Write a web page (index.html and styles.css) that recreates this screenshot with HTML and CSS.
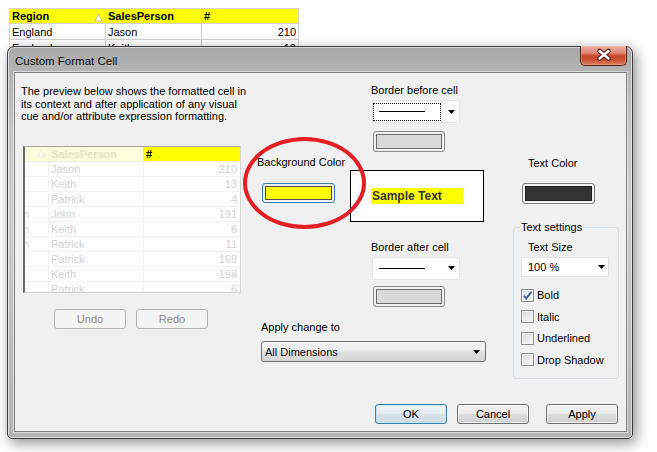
FILE: index.html
```html
<!DOCTYPE html>
<html>
<head>
<meta charset="utf-8">
<title>Custom Format Cell</title>
<link rel="stylesheet" href="styles.css">
</head>
<body>
<div class="desk">
  <table class="sheet">
    <colgroup><col class="w1"><col class="w2"><col class="w3"></colgroup>
    <tr class="hrow">
      <th>Region<svg class="sort" width="9" height="9" viewBox="0 0 9 9"><path d="M4.5 0.8 L8.3 8.2 H0.7 Z" fill="#ffffc8" stroke="#c3c39a" stroke-width="1"/></svg></th>
      <th>SalesPerson</th>
      <th>#</th>
    </tr>
    <tr><td>England</td><td>Jason</td><td class="num">210</td></tr>
    <tr><td>England</td><td>Keith</td><td class="num">13</td></tr>
    <tr><td>England</td><td>Patrick</td><td class="num">4</td></tr>
  </table>

  <div class="win">
    <div class="titlebar">
      <span class="title">Custom Format Cell</span>
      <div class="close">
        <svg width="47" height="20" viewBox="0 0 47 20">
          <path d="M19.5 6 L28.5 13.5 M28.5 6 L19.5 13.5" stroke="#4a1a12" stroke-width="4.6" stroke-linecap="round"/>
          <path d="M19.5 6 L28.5 13.5 M28.5 6 L19.5 13.5" stroke="#ffffff" stroke-width="2.4" stroke-linecap="round"/>
        </svg>
      </div>
    </div>
    <div class="client">
      <div class="main">
        <div class="left">
          <p class="desc">The preview below shows the formatted cell in<br>its context and after application of any visual<br>cue and/or attribute expression formatting.</p>
          <div class="preview">
            <div class="prow phead"><span class="c1"><svg width="9" height="9" viewBox="0 0 9 9"><path d="M4.5 0.8 L8.3 8.2 H0.7 Z" fill="#fffff0" stroke="#ecebd6" stroke-width="1"/></svg></span><span class="c2">SalesPerson</span><span class="c3">#</span></div>
            <div class="prow"><span class="c1"></span><span class="c2">Jason</span><span class="c3">210</span></div>
            <div class="prow"><span class="c1"></span><span class="c2">Keith</span><span class="c3">13</span></div>
            <div class="prow"><span class="c1"></span><span class="c2">Patrick</span><span class="c3">4</span></div>
            <div class="prow"><span class="c1"><span class="tail">n</span></span><span class="c2">John</span><span class="c3">191</span></div>
            <div class="prow"><span class="c1"><span class="tail">n</span></span><span class="c2">Keith</span><span class="c3">6</span></div>
            <div class="prow"><span class="c1"><span class="tail">n</span></span><span class="c2">Patrick</span><span class="c3">11</span></div>
            <div class="prow"><span class="c1"></span><span class="c2">Patrick</span><span class="c3">169</span></div>
            <div class="prow"><span class="c1"></span><span class="c2">Keith</span><span class="c3">198</span></div>
            <div class="prow"><span class="c1"></span><span class="c2">Patrick</span><span class="c3">6</span></div>
          </div>
          <div class="undo-row">
            <button class="btn dis">Undo</button>
            <button class="btn dis">Redo</button>
          </div>
        </div>

        <div class="center">
          <div class="center-top">
            <div class="bgcol">
              <div class="lbl bglbl">Background Color</div>
              <div class="swatch sw-focus sw-bg"><span class="fill fill-yellow"></span></div>
            </div>
            <div class="bordcol">
              <div class="lbl blbl">Border before cell</div>
              <div class="linesel ls-before">
                <span class="lsample focusrect"><span class="ln"></span></span>
                <svg class="arr" width="7" height="4" viewBox="0 0 7 4"><path d="M0 0H7L3.5 4Z" fill="#000"/></svg>
              </div>
              <div class="swatch sw-border sw-b1"><span class="fill fill-gray"></span></div>
              <div class="sample"><span class="sample-text">Sample Text</span></div>
              <div class="lbl blbl albl">Border after cell</div>
              <div class="linesel ls-after">
                <span class="lsample"><span class="ln"></span></span>
                <svg class="arr" width="7" height="4" viewBox="0 0 7 4"><path d="M0 0H7L3.5 4Z" fill="#000"/></svg>
              </div>
              <div class="swatch sw-border sw-b2"><span class="fill fill-gray"></span></div>
            </div>
          </div>
          <div class="apply">
            <div class="lbl">Apply change to</div>
            <div class="combo"><span>All Dimensions</span><svg class="arr" width="7" height="4" viewBox="0 0 7 4"><path d="M0 0H7L3.5 4Z" fill="#000"/></svg></div>
          </div>
        </div>

        <div class="right">
          <div class="lbl tclbl">Text Color</div>
          <div class="swatch sw-border sw-tc"><span class="fill fill-dark"></span></div>
          <fieldset class="group">
            <legend>Text settings</legend>
            <div class="lbl tslbl">Text Size</div>
            <div class="select"><span>100 %</span><svg class="arr" width="7" height="4" viewBox="0 0 7 4"><path d="M0 0H7L3.5 4Z" fill="#000"/></svg></div>
            <div class="checks">
              <label class="chk"><span class="box checked"><svg width="11" height="11" viewBox="0 0 11 11"><path d="M1.8 5.6 L4.3 8.4 L9.4 1.8" fill="none" stroke="#4b5f8c" stroke-width="1.9"/></svg></span>Bold</label>
              <label class="chk"><span class="box"></span>Italic</label>
              <label class="chk"><span class="box"></span>Underlined</label>
              <label class="chk"><span class="box"></span>Drop Shadow</label>
            </div>
          </fieldset>
        </div>
      </div>
      <div class="footer">
        <button class="btn def">OK</button>
        <button class="btn">Cancel</button>
        <button class="btn apply-btn">Apply</button>
      </div>
    </div>
  </div>

  <div class="ellipse"></div>
</div>
</body>
</html>
```

FILE: styles.css
```css
* { box-sizing: border-box; }
html, body { margin: 0; padding: 0; background: #fff; }
body {
  font-family: "Liberation Sans", Arial, sans-serif;
  font-size: 11px;
  color: #000;
  width: 657px;
  height: 452px;
  overflow: hidden;
}
.desk { position: relative; width: 657px; height: 452px; padding: 8px 0 0 9px; }

/* background sheet table */
.sheet { border-collapse: collapse; table-layout: fixed; width: 289px; }
.sheet .w1 { width: 96px; }
.sheet .w2 { width: 96px; }
.sheet .w3 { width: 97px; }
.sheet th, .sheet td {
  border: 1px solid #d2d2d2;
  padding: 0 2px;
  text-align: left;
  white-space: nowrap;
  overflow: hidden;
  font-size: 11px;
}
.sheet th { height: 15px; line-height: 13px; background: #ffff00; font-weight: bold; }
.sheet td { height: 16px; line-height: 14px; background: #fff; }
.sheet td.num { text-align: right; }
.sheet .sort { float: right; margin-top: 3px; margin-right: 0; }

/* dialog window */
.win {
  position: absolute;
  left: 7px;
  top: 46px;
  width: 626px;
  height: 393px;
  border: 1px solid #3c3c3c;
  border-radius: 7px 7px 5px 5px;
  background: linear-gradient(180deg, #a9a9a9 0%, #b3b3b3 6%, #c6c6c6 22%, #cfcfcf 40%, #bdbdbd 75%, #b4b4b4 100%);
  box-shadow: 3px 4px 14px rgba(0, 0, 0, 0.45), inset 0 0 0 1px rgba(255, 255, 255, 0.55);
  display: flex;
  flex-direction: column;
  padding: 0 5px 6px 6px;
}
.titlebar { height: 25px; display: flex; align-items: flex-start; }
.title { padding: 7px 0 0 1px; font-size: 11.5px; line-height: 15px; color: #0c0c0c; }
.close {
  margin-left: auto;
  margin-top: -1px;
  width: 47px;
  height: 20px;
  border: 1px solid #5b1f16;
  border-top: none;
  border-radius: 0 0 5px 5px;
  background: linear-gradient(180deg, #eab0a3 0%, #de8877 35%, #c9472f 52%, #c94d33 70%, #dc7c5d 100%);
  box-shadow: inset 0 0 0 1px rgba(255, 200, 190, 0.35);
}
.close svg { display: block; margin: -1px 0 0 -1px; }

.client {
  flex: 1;
  background: #f0f0f0;
  border: 1px solid #808080;
  box-shadow: 0 0 0 1px rgba(255, 255, 255, 0.5);
  display: flex;
  flex-direction: column;
}
.main { flex: 1; display: flex; }

.lbl { line-height: 13px; white-space: nowrap; }

/* left column */
.left { width: 236px; padding: 12px 0 0 6px; }
.desc { margin: 0; line-height: 12.5px; }
.preview {
  width: 218px;
  height: 147px;
  margin: 23px 0 0 2px;
  background: #fff;
  border-top: 1px solid #a8a8a8;
  border-left: 2px solid #6a6a6a;
  border-right: 1px solid #d6d6d6;
  border-bottom: 1px solid #d0d0d0;
  overflow: hidden;
}
.prow {
  display: grid;
  grid-template-columns: 23px 95px 1fr;
  height: 15px;
  line-height: 14px;
  border-bottom: 1px solid #f3f3f3;
  color: #d2d2d2;
}
.prow .c1 { overflow: hidden; white-space: nowrap; }
.prow .c2 { padding-left: 2px; border-left: 1px solid #f2f2f2; }
.prow .c3 { text-align: right; padding-right: 3px; border-left: 1px solid #f2f2f2; }
.prow .tail { display: inline-block; margin-left: -2px; }
.phead { background: #fdfddc; font-weight: bold; color: #e4e3c6; border-bottom: 1px solid #efefd8; }
.phead .c1 { display: flex; justify-content: flex-end; align-items: center; padding-right: 2px; }
.phead .c1 svg { display: block; }
.phead .c2 { border-left-color: #f4f4dc; }
.phead .c3 { background: #ffff00; color: #000; text-align: left; padding-left: 2px; border-left: 1px solid #e8e8c8; }

.undo-row { display: flex; gap: 10px; margin: 16px 0 0 33px; }

/* buttons */
.btn {
  width: 72px;
  height: 20px;
  padding: 0;
  font-family: inherit;
  font-size: 11px;
  color: #000;
  border: 1px solid #707070;
  border-radius: 3px;
  background: linear-gradient(180deg, #f2f2f2 0%, #ebebeb 48%, #dddddd 52%, #cfcfcf 100%);
  box-shadow: inset 0 0 0 1px rgba(255, 255, 255, 0.7);
}
.btn.dis {
  color: #8a8a8a;
  border-color: #b3b3b3;
  background: #f4f4f4;
  box-shadow: none;
}
.btn.def {
  border-color: #3c7fb1;
  background: linear-gradient(180deg, #eef4f8 0%, #e6edf2 48%, #d8e2e9 52%, #cfdae2 100%);
  box-shadow: inset 0 0 0 1px rgba(180, 230, 250, 0.8);
}

/* center column */
.center { width: 262px; display: flex; flex-direction: column; }
.center-top { display: flex; }
.bgcol { width: 99px; padding-top: 83px; }
.bglbl { padding-left: 6px; }
.bordcol { flex: 1; padding-top: 10.5px; display: flex; flex-direction: column; align-items: flex-start; }
.blbl { margin-left: 21px; }
.albl { margin-top: 18.5px; }

.swatch {
  width: 72px;
  height: 21px;
  border: 1px solid #8a8a8a;
  border-radius: 3px;
  padding: 2px;
  background: #f2f2f2;
}
.swatch .fill { display: block; height: 100%; border: 1px solid #666; }
.sw-focus { border-color: #3d7bb0; width: 73px; height: 20px; }
.sw-bg { margin: 14px 0 0 11px; }
.sw-b1 { margin: 8px 0 0 23px; }
.sw-b2 { margin: 6px 0 0 23px; }
.sw-tc { width: 73px; margin: 13.5px 0 0 9px; border-color: #7c7c7c; }
.fill-yellow { background: #ffff00; border-color: #4d4d4d !important; }
.fill-gray { background: #dadada; border-color: #6b6b6b !important; }
.fill-dark { background: #333333; border-color: #1e1e1e !important; }

.linesel {
  width: 88px;
  height: 23px;
  background: #fff;
  border: 1px solid #e4e4e4;
  display: flex;
  align-items: center;
  margin: 3.5px 0 0 22px;
}
.ls-after { margin-top: 3px; }
.lsample {
  width: 68px;
  height: 18px;
  border: 1px dotted transparent;
  display: flex;
  align-items: center;
  padding-left: 5px;
}
.lsample.focusrect { border-color: #000; }
.ln { display: block; width: 46px; height: 1px; background: #000; }
.arr { display: block; margin-left: auto; margin-right: 4px; }

.sample {
  width: 134px;
  height: 52px;
  margin-top: 18px;
  border: 1px solid #000;
  background: #fff;
  padding: 16.7px 0 0 20px;
}
.sample-text {
  display: block;
  width: 92px;
  height: 16px;
  line-height: 16px;
  padding-left: 1px;
  background: #ffff00;
  color: #333;
  font-weight: bold;
  font-size: 12px;
}

.apply { padding-left: 10px; margin-top: 14.8px; }
.combo {
  width: 225px;
  height: 21px;
  margin-top: 7.2px;
  border: 1px solid #707070;
  border-radius: 3px;
  background: linear-gradient(180deg, #f3f3f3 0%, #ececec 48%, #dfdfdf 52%, #d6d6d6 100%);
  display: flex;
  align-items: center;
  padding-left: 3px;
  color: #0a0a1e;
}
.combo .arr { margin-right: 5px; }

/* right column */
.right { flex: 1; padding-top: 83.5px; }
.tclbl { padding-left: 15px; }
.group {
  width: 106px;
  margin: 16.5px 0 0 0;
  padding: 0 0 8px 7px;
  border: 1px solid #d5dfe5;
  border-radius: 3px;
  min-width: 0;
}
.group legend { padding: 0 1px; margin-left: -1px; line-height: 13px; }
.tslbl { margin-top: 7px; padding-left: 7px; }
.select {
  width: 88px;
  height: 20px;
  margin-top: 3.5px;
  background: #fff;
  border: 1px solid #e2e2e2;
  display: flex;
  align-items: center;
  padding-left: 6px;
}
.select .arr { margin-right: 3px; }
.checks { margin-top: 7.25px; }
.chk { display: flex; align-items: center; height: 21.5px; gap: 3px; white-space: nowrap; }
.box {
  width: 13px;
  height: 13px;
  border: 1px solid #8e8f8f;
  background: linear-gradient(135deg, #d8d8d8 0%, #ececec 60%, #f8f8f8 100%);
  box-shadow: inset 0 0 0 1px #f4f4f4;
  display: flex;
  align-items: center;
  justify-content: center;
}
.box.checked { background: linear-gradient(135deg, #dfe3ec 0%, #f2f4f8 100%); }
.box svg { display: block; }

/* footer */
.footer { display: flex; justify-content: flex-end; padding: 0 8px 7px 0; }
.footer .btn + .btn { margin-left: 10px; }
.footer .apply-btn { margin-left: 17px !important; }

/* annotation */
.ellipse {
  position: absolute;
  left: 243px;
  top: 137px;
  width: 123px;
  height: 92px;
  border: 4px solid #e51d24;
  border-radius: 50%;
}
```
